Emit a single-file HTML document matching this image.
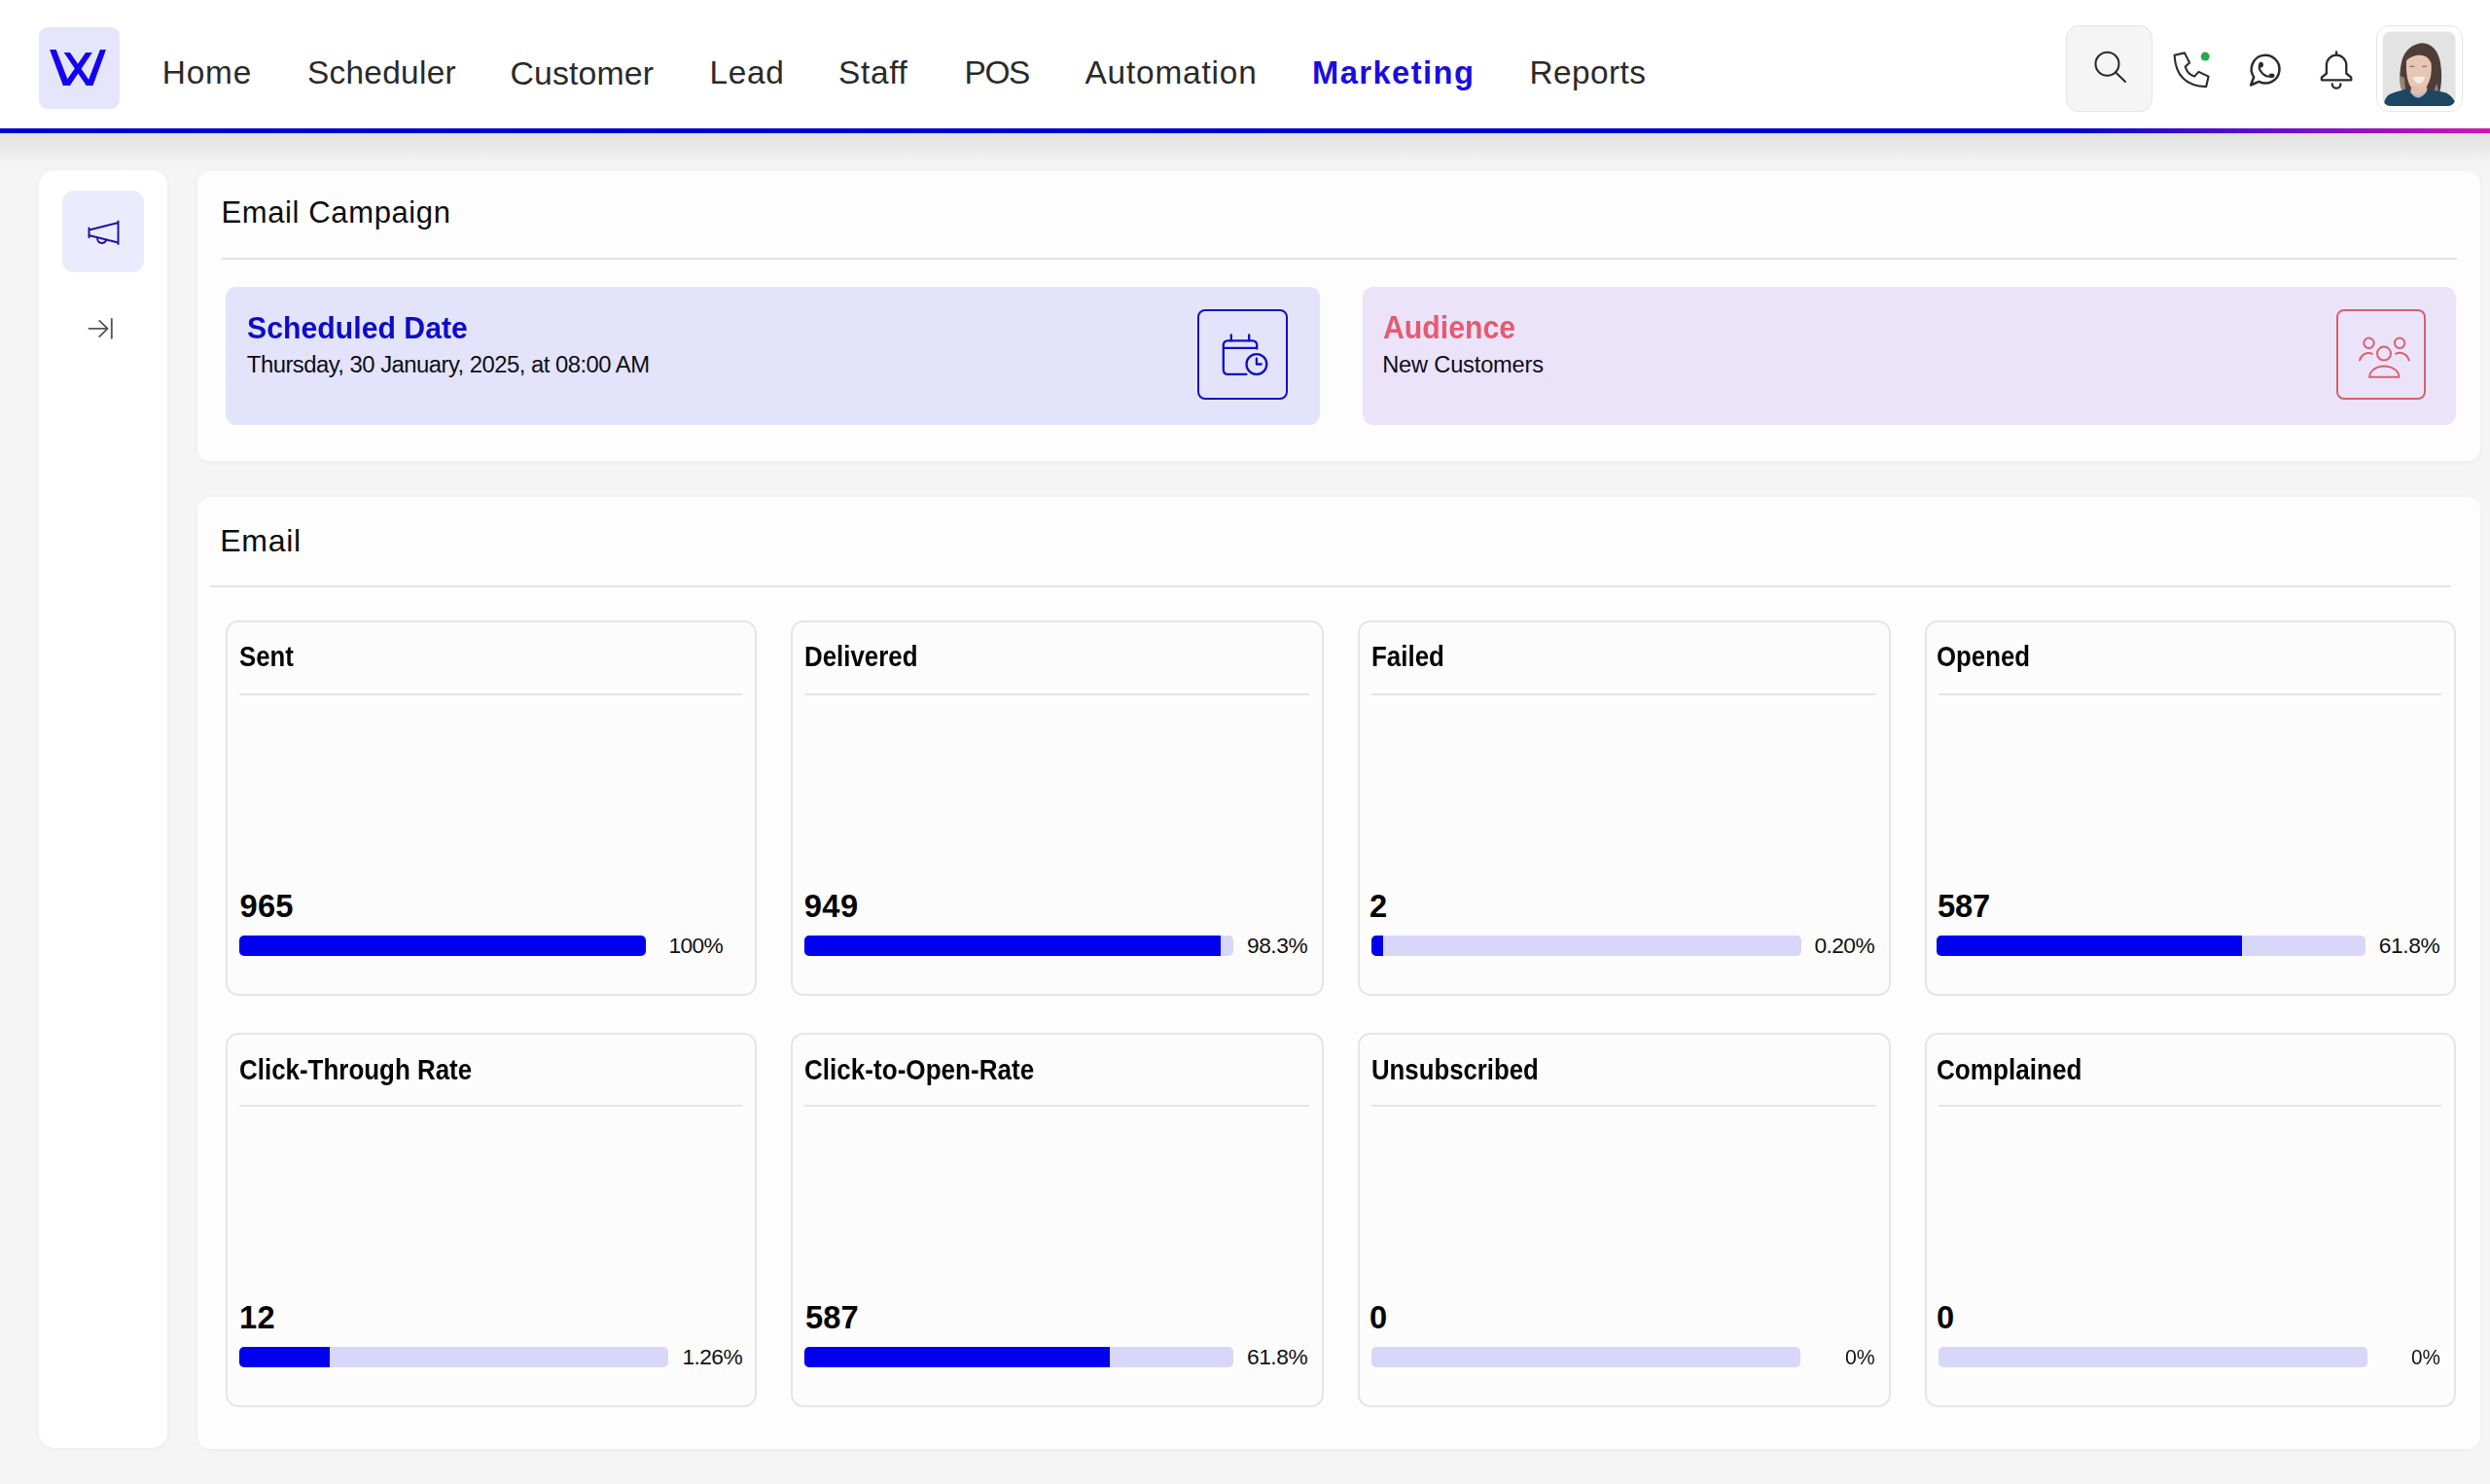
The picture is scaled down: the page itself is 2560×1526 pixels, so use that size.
<!DOCTYPE html>
<html><head><meta charset="utf-8"><title>Email Campaign</title>
<style>
html,body{margin:0;padding:0;}
body{width:2560px;height:1526px;position:relative;overflow:hidden;background:#f5f5f5;font-family:"Liberation Sans",sans-serif;}
.b{position:absolute;}
.t{position:absolute;line-height:0;white-space:nowrap;}
.ov{position:absolute;left:0;top:0;}
</style></head><body>
<div class="b" style="left:0px;top:0px;width:2560px;height:132px;background:#fff"></div><div class="b" style="left:0px;top:132px;width:2560px;height:5px;background:linear-gradient(90deg,#0000cc 0%,#0000cf 83%,#5a10cc 90.5%,#d215b4 100%)"></div><div class="b" style="left:0px;top:137px;width:2560px;height:39px;background:linear-gradient(180deg,#dfe1df 0%,#e9e9e9 35%,#f1f1f1 70%,#f5f5f5 100%)"></div><div class="b" style="left:40px;top:28px;width:83px;height:84px;background:#e5e5fc;border-radius:9px"></div><div class="b" style="left:2124px;top:26px;width:89px;height:89px;background:#f5f5f5;border:1.5px solid #e4e4e4;border-radius:13px;box-sizing:border-box"></div><div class="b" style="left:2442.5px;top:26px;width:89px;height:89px;background:#fff;border:1.5px solid #e6e6e6;border-radius:13px;box-sizing:border-box"></div><div class="b" style="left:39.5px;top:175px;width:132.5px;height:1314px;background:#fff;border-radius:16px;box-shadow:0 1px 6px rgba(0,0,0,0.045)"></div><div class="b" style="left:64px;top:196px;width:84px;height:84px;background:#ebebfd;border-radius:12px"></div><div class="b" style="left:203.3px;top:176px;width:2347.2px;height:297.7px;background:#fdfdfd;border-radius:13px;box-shadow:0 1px 6px rgba(0,0,0,0.04)"></div><div class="b" style="left:228px;top:265px;width:2298px;height:2px;background:#e3e3e3"></div><div class="b" style="left:232px;top:295px;width:1124.5px;height:141.7px;background:#e3e3fc;border-radius:11px"></div><div class="b" style="left:1401px;top:295px;width:1124px;height:141.5px;background:#ebe3fa;border-radius:11px"></div><div class="b" style="left:1231.4px;top:318.2px;width:92.6px;height:92.9px;border:2.4px solid #1410c0;border-radius:8px;box-sizing:border-box"></div><div class="b" style="left:2402.4px;top:318.4px;width:92px;height:92.3px;border:2.2px solid #d9606f;border-radius:8px;box-sizing:border-box"></div><div class="b" style="left:203.3px;top:511.2px;width:2347.2px;height:978.8px;background:#fdfdfd;border-radius:13px;box-shadow:0 1px 6px rgba(0,0,0,0.04)"></div><div class="b" style="left:216px;top:602px;width:2304px;height:2px;background:#e3e3e3"></div><div class="b" style="left:232px;top:638.4px;width:546px;height:385.4px;background:#fcfcfc;border:2px solid #e5e5e5;border-radius:13px;box-sizing:border-box"></div><div class="b" style="left:246px;top:713px;width:517px;height:2px;background:#e5e5e5"></div><div class="b" style="left:813px;top:638.4px;width:548px;height:385.4px;background:#fcfcfc;border:2px solid #e5e5e5;border-radius:13px;box-sizing:border-box"></div><div class="b" style="left:827px;top:713px;width:519px;height:2px;background:#e5e5e5"></div><div class="b" style="left:1396px;top:638.4px;width:548px;height:385.4px;background:#fcfcfc;border:2px solid #e5e5e5;border-radius:13px;box-sizing:border-box"></div><div class="b" style="left:1410px;top:713px;width:519px;height:2px;background:#e5e5e5"></div><div class="b" style="left:1979px;top:638.4px;width:546px;height:385.4px;background:#fcfcfc;border:2px solid #e5e5e5;border-radius:13px;box-sizing:border-box"></div><div class="b" style="left:1993px;top:713px;width:517px;height:2px;background:#e5e5e5"></div><div class="b" style="left:232px;top:1062px;width:546px;height:385px;background:#fcfcfc;border:2px solid #e5e5e5;border-radius:13px;box-sizing:border-box"></div><div class="b" style="left:246px;top:1136px;width:517px;height:2px;background:#e5e5e5"></div><div class="b" style="left:813px;top:1062px;width:548px;height:385px;background:#fcfcfc;border:2px solid #e5e5e5;border-radius:13px;box-sizing:border-box"></div><div class="b" style="left:827px;top:1136px;width:519px;height:2px;background:#e5e5e5"></div><div class="b" style="left:1396px;top:1062px;width:548px;height:385px;background:#fcfcfc;border:2px solid #e5e5e5;border-radius:13px;box-sizing:border-box"></div><div class="b" style="left:1410px;top:1136px;width:519px;height:2px;background:#e5e5e5"></div><div class="b" style="left:1979px;top:1062px;width:546px;height:385px;background:#fcfcfc;border:2px solid #e5e5e5;border-radius:13px;box-sizing:border-box"></div><div class="b" style="left:1993px;top:1136px;width:517px;height:2px;background:#e5e5e5"></div><div class="b" style="left:246px;top:962px;width:418px;height:20.5px;background:#d8d7f9;border-radius:5px"></div><div class="b" style="left:246px;top:962px;width:418px;height:20.5px;background:#0000ee;border-radius:5px"></div><div class="b" style="left:827px;top:962px;width:441px;height:20.5px;background:#d8d7f9;border-radius:5px"></div><div class="b" style="left:827px;top:962px;width:428px;height:20.5px;background:#0000ee;border-radius:5px 0 0 5px"></div><div class="b" style="left:1410px;top:962px;width:442px;height:20.5px;background:#d8d7f9;border-radius:5px"></div><div class="b" style="left:1410px;top:962px;width:12px;height:20.5px;background:#0000ee;border-radius:5px 0 0 5px"></div><div class="b" style="left:1991px;top:962px;width:441px;height:20.5px;background:#d8d7f9;border-radius:5px"></div><div class="b" style="left:1991px;top:962px;width:314px;height:20.5px;background:#0000ee;border-radius:5px 0 0 5px"></div><div class="b" style="left:246px;top:1385px;width:441px;height:20.5px;background:#d8d7f9;border-radius:5px"></div><div class="b" style="left:246px;top:1385px;width:93px;height:20.5px;background:#0000ee;border-radius:5px 0 0 5px"></div><div class="b" style="left:827px;top:1385px;width:441px;height:20.5px;background:#d8d7f9;border-radius:5px"></div><div class="b" style="left:827px;top:1385px;width:313.5px;height:20.5px;background:#0000ee;border-radius:5px 0 0 5px"></div><div class="b" style="left:1410px;top:1385px;width:441px;height:20.5px;background:#d8d7f9;border-radius:5px"></div><div class="b" style="left:1993px;top:1385px;width:441px;height:20.5px;background:#d8d7f9;border-radius:5px"></div>
<svg class="ov" width="2560" height="1526" viewBox="0 0 2560 1526">
<defs><clipPath id="av"><rect x="2449.7" y="32.6" width="74.9" height="76.4" rx="8"/></clipPath></defs>
<g fill="#1400f0"><polygon points="51.06,51.06 57.63,51.06 69.39,81.36 88.11,54.09 94.85,54.09 71.94,87.94 64.87,87.94"/><polygon points="65.71,54.09 71.94,54.09 91.17,81.7 102.93,51.06 109,51.06 95.52,87.94 88.78,87.94"/></g>
<g fill="none" stroke="#1c14a8" stroke-width="2" stroke-linecap="round" stroke-linejoin="round">
<path d="M91.5 234.5V244M121.5 227.4V251M91.5 236.5L121.5 229M91.5 242L121.5 249.5"/>
<path d="M100.3 244.2A4.6 4.6 0 0 0 109.3 246.45"/>
</g>
<g fill="none" stroke="#555" stroke-width="1.9" stroke-linecap="round" stroke-linejoin="round">
<path d="M91.5 337.9H110M102.3 329.9L110.6 337.9L102.3 346.1M114.8 328V347.7"/>
</g>
<g fill="none" stroke="#2b2b2b" stroke-width="2.1" stroke-linecap="round" stroke-linejoin="round">
<circle cx="2166.5" cy="65.8" r="12"/>
<path d="M2175.2 74.6L2185 84"/>
<path d="M2235.6 56.7L2246 54.4L2251.1 64.5L2246.7 68.5Q2249 76.5 2256.1 78.6L2260.5 73.9L2270.6 78.6L2268.2 89.1Q2237 88 2235.6 56.7Z"/>
</g>
<circle cx="2267.2" cy="58.1" r="4.5" fill="#2aa84a"/>
<g fill="none" stroke="#2b2b2b" stroke-width="2.5" stroke-linejoin="round">
<path d="M2317.2 79.2L2314.1 87.5L2322.5 83.9A14.4 14.4 0 1 0 2317.2 79.2Z"/>
<path d="M2324.5 65C2321.5 68.5 2322.5 72 2326 75.5C2329 78.5 2333 79.5 2337 78" stroke-width="2.2" stroke-linecap="round"/>
</g>
<g fill="#2b2b2b"><ellipse cx="2324.6" cy="66.6" rx="2.4" ry="2.9"/><ellipse cx="2335.6" cy="77.8" rx="2.9" ry="2.4"/></g>
<g fill="none" stroke="#2b2b2b" stroke-width="2.3" stroke-linecap="round" stroke-linejoin="round">
<path d="M2386.9 82.3V79.7L2391.9 75.5V67.2A10.2 10.5 0 0 1 2412.3 67.2V75.5L2417.3 79.7V82.3Z"/>
<path d="M2402.1 53.5V56.7M2397.8 86.4A4.3 4.3 0 0 0 2406.4 86.4"/>
</g>
<g fill="none" stroke="#1410c0" stroke-width="2.3" stroke-linecap="round" stroke-linejoin="round">
<path d="M1281.5 384.8H1262A4.2 4.2 0 0 1 1257.8 380.6V354.6A4.2 4.2 0 0 1 1262 350.4H1288A4.2 4.2 0 0 1 1292.2 354.6V358.5"/>
<path d="M1258.5 357.8H1291.5M1265.8 344.3V350.4M1284.2 344.3V350.4"/>
<circle cx="1291.9" cy="374.5" r="10.4"/>
<path d="M1291.9 368.7V374.5H1296.7"/>
</g>
<g fill="none" stroke="#d9606f" stroke-width="2" stroke-linecap="round" stroke-linejoin="round">
<circle cx="2451" cy="363.6" r="7"/>
<path d="M2436.1 387.8A15.2 11.4 0 0 1 2466.5 387.8Z"/>
<circle cx="2435.5" cy="352.8" r="5.2"/>
<circle cx="2467.1" cy="352.8" r="5.2"/>
<path d="M2438.8 363.8A9.5 9.5 0 0 0 2426 370.6M2463.1 363.8A9.5 9.5 0 0 1 2476.6 370.6"/>
</g>
<filter id="sf" x="-5%" y="-5%" width="110%" height="110%"><feGaussianBlur stdDeviation="0.6"/></filter><g clip-path="url(#av)"><g filter="url(#sf)">
<rect x="2449" y="32" width="76" height="78" fill="#e4e3e4"/>
<path d="M2469 92C2466.5 84 2467 72 2469.5 62C2472 52 2480 45 2490.5 44.2C2500 44.5 2506 52 2508.5 62C2510.5 72 2511 84 2508 96L2500 97L2478 96Z" fill="#4f3d37"/>
<path d="M2467.8 78C2467 84 2467.5 89 2469.5 92L2473 92L2472 80Z" fill="#9c8274"/>
<path d="M2505 86C2507 90 2507 94 2505.5 97L2502 96Z" fill="#8d8a92"/>
<path d="M2474 64C2474 58 2478 55 2483 55C2490 55 2497 58 2499.5 65C2500.5 74 2499 84 2494 90C2491 93 2482 93 2479 90C2475 85 2473.5 74 2474 64Z" fill="#e8c6b4"/>
<path d="M2473 63C2476 54 2486 50 2495 52C2500 54 2503 58 2504 64C2498 58 2490 56 2484 57C2480 58 2476 60 2473 63Z" fill="#4f3d37"/>
<path d="M2477.5 68.6Q2480 67.4 2482.4 68.6M2490.2 68.6Q2492.6 67.4 2495 68.6" stroke="#7a5a50" stroke-width="1" fill="none"/>
<path d="M2481 79.5Q2487 78 2493 79.5Q2491 86 2487 86Q2483 86 2481 79.5Z" fill="#f4ece6"/>
<path d="M2479 89L2495 89L2496 99L2478 99Z" fill="#e3bfae"/>
<path d="M2450.5 109C2451.5 102 2454 98 2458 96.5C2464 94 2470 92.5 2476 91.5Q2480 99 2486 100.6Q2492 99 2496 92C2503 93 2510 94 2515 95.5C2520 98 2523 102 2524.5 106L2525 110L2450 110Z" fill="#1f4763"/>
<path d="M2477 92.5Q2481 99.5 2486 100.3Q2491.5 99.5 2495.5 92.8Q2491 97.5 2486 97.8Q2481 97.5 2477 92.5Z" fill="#b8b8c0"/>
</g></g>
</svg>
<div class="t" style="left:166.69px;top:75.24px;font-size:33.42px;font-weight:400;color:#2a2a2a;letter-spacing:0.84px">Home</div><div class="t" style="left:315.96px;top:75.24px;font-size:33.42px;font-weight:400;color:#2a2a2a;letter-spacing:0.28px">Scheduler</div><div class="t" style="left:524.41px;top:75.29px;font-size:33.85px;font-weight:400;color:#2a2a2a;letter-spacing:0.15px">Customer</div><div class="t" style="left:729.39px;top:75.24px;font-size:33.42px;font-weight:400;color:#2a2a2a;letter-spacing:0.71px">Lead</div><div class="t" style="left:861.96px;top:75.24px;font-size:33.42px;font-weight:400;color:#2a2a2a;letter-spacing:0.7px">Staff</div><div class="t" style="left:991.39px;top:75.24px;font-size:33.42px;font-weight:400;color:#2a2a2a;letter-spacing:-1.28px">POS</div><div class="t" style="left:1115.5px;top:75.24px;font-size:33.42px;font-weight:400;color:#2a2a2a;letter-spacing:0.81px">Automation</div><div class="t" style="left:1348.96px;top:75.48px;font-size:32.71px;font-weight:700;color:#1a0de0;letter-spacing:1.45px">Marketing</div><div class="t" style="left:1572.39px;top:75.24px;font-size:33.42px;font-weight:400;color:#2a2a2a;letter-spacing:0.44px">Reports</div><div class="t" style="left:227.48px;top:219.07px;font-size:31px;font-weight:400;color:#0d0d0d;letter-spacing:0.62px">Email Campaign</div><div class="t" style="left:253.93px;top:337.23px;font-size:32.28px;font-weight:700;color:#0c0cc8;transform:scaleX(0.9374);transform-origin:0 0">Scheduled Date</div><div class="t" style="left:253.83px;top:374.73px;font-size:23.89px;font-weight:400;color:#0d0d14;letter-spacing:-0.53px">Thursday, 30 January, 2025, at 08:00 AM</div><div class="t" style="left:1421.93px;top:336.39px;font-size:33.85px;font-weight:700;color:#e65a70;transform:scaleX(0.8942);transform-origin:0 0">Audience</div><div class="t" style="left:1421.16px;top:374.63px;font-size:23.61px;font-weight:400;color:#0d0d1a;letter-spacing:-0.17px">New Customers</div><div class="t" style="left:226.29px;top:556.28px;font-size:32.14px;font-weight:400;color:#0d0d0d;letter-spacing:0.66px">Email</div><div class="t" style="left:246.4px;top:675.31px;font-size:28.87px;font-weight:700;color:#050505;transform:scaleX(0.8923);transform-origin:0 0">Sent</div><div class="t" style="left:827.08px;top:675.31px;font-size:28.87px;font-weight:700;color:#050505;transform:scaleX(0.8960);transform-origin:0 0">Delivered</div><div class="t" style="left:1410.08px;top:675.31px;font-size:28.87px;font-weight:700;color:#050505;transform:scaleX(0.8988);transform-origin:0 0">Failed</div><div class="t" style="left:1991.19px;top:675.31px;font-size:28.87px;font-weight:700;color:#050505;transform:scaleX(0.8947);transform-origin:0 0">Opened</div><div class="t" style="left:246.39px;top:1100.26px;font-size:28.73px;font-weight:700;color:#050505;transform:scaleX(0.9030);transform-origin:0 0">Click-Through Rate</div><div class="t" style="left:827.28px;top:1100.26px;font-size:28.73px;font-weight:700;color:#050505;transform:scaleX(0.9085);transform-origin:0 0">Click-to-Open-Rate</div><div class="t" style="left:1410.19px;top:1100.26px;font-size:28.73px;font-weight:700;color:#050505;transform:scaleX(0.8971);transform-origin:0 0">Unsubscribed</div><div class="t" style="left:1991.18px;top:1100.26px;font-size:28.73px;font-weight:700;color:#050505;transform:scaleX(0.9093);transform-origin:0 0">Complained</div><div class="t" style="left:246.48px;top:931.68px;font-size:32.71px;font-weight:700;color:#050505;letter-spacing:0.23px">965</div><div class="t" style="left:826.68px;top:931.68px;font-size:32.71px;font-weight:700;color:#050505;letter-spacing:0.48px">949</div><div class="t" style="left:1407.98px;top:931.68px;font-size:32.71px;font-weight:700;color:#050505;letter-spacing:0px">2</div><div class="t" style="left:1991.99px;top:931.68px;font-size:32.71px;font-weight:700;color:#050505;letter-spacing:-0.22px">587</div><div class="t" style="left:245.96px;top:1354.68px;font-size:32.71px;font-weight:700;color:#050505;letter-spacing:0.27px">12</div><div class="t" style="left:827.89px;top:1354.68px;font-size:32.71px;font-weight:700;color:#050505;letter-spacing:0.13px">587</div><div class="t" style="left:1407.98px;top:1354.68px;font-size:32.71px;font-weight:700;color:#050505;letter-spacing:0px">0</div><div class="t" style="left:1990.98px;top:1354.68px;font-size:32.71px;font-weight:700;color:#050505;letter-spacing:0px">0</div><div class="t" style="left:687.58px;top:972.13px;font-size:22.76px;font-weight:400;color:#111111;letter-spacing:-0.7px">100%</div><div class="t" style="left:1281.93px;top:972.13px;font-size:22.76px;font-weight:400;color:#111111;letter-spacing:-0.44px">98.3%</div><div class="t" style="left:1865.59px;top:972.13px;font-size:22.76px;font-weight:400;color:#111111;letter-spacing:-0.61px">0.20%</div><div class="t" style="left:2445.63px;top:972.13px;font-size:22.76px;font-weight:400;color:#111111;letter-spacing:-0.37px">61.8%</div><div class="t" style="left:701.38px;top:1395.13px;font-size:22.76px;font-weight:400;color:#111111;letter-spacing:-0.56px">1.26%</div><div class="t" style="left:1281.93px;top:1395.13px;font-size:22.76px;font-weight:400;color:#111111;letter-spacing:-0.44px">61.8%</div><div class="t" style="left:1897.33px;top:1395.13px;font-size:22.76px;font-weight:400;color:#111111;transform:scaleX(0.9365);transform-origin:0 0">0%</div><div class="t" style="left:2478.65px;top:1395.13px;font-size:22.76px;font-weight:400;color:#111111;transform:scaleX(0.9111);transform-origin:0 0">0%</div>
</body></html>
